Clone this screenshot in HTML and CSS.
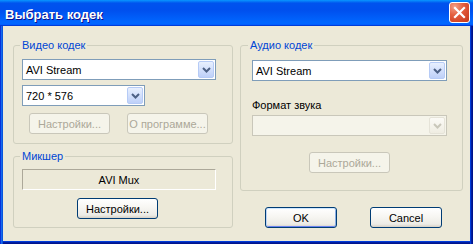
FILE: index.html
```html
<!DOCTYPE html>
<html lang="ru">
<head>
<meta charset="utf-8">
<title>Выбрать кодек</title>
<link rel="stylesheet" href="styles.css">
</head>
<body>
<div class="window">
  <div class="titlebar">
    <span class="title">Выбрать кодек</span>
    <span class="close"><svg width="19" height="19" viewBox="0 0 19 19"><path d="M5 5 L14 14 M14 5 L5 14" stroke="#fff" stroke-width="2.2" stroke-linecap="square"/></svg></span>
  </div>
  <div class="body">
    <div class="col col-left">
      <fieldset class="group group-video">
        <legend>Видео кодек</legend>
        <div class="combo combo-wide"><span class="val">AVI Stream</span><span class="drop"><svg width="9" height="6" viewBox="0 0 9 6"><path d="M1 1 L4.5 4.5 L8 1" fill="none" stroke="#4D6185" stroke-width="2"/></svg></span></div>
        <div class="combo combo-narrow"><span class="val">720 * 576</span><span class="drop"><svg width="9" height="6" viewBox="0 0 9 6"><path d="M1 1 L4.5 4.5 L8 1" fill="none" stroke="#4D6185" stroke-width="2"/></svg></span></div>
        <div class="btnrow">
          <button class="btn" disabled>Настройки...</button>
          <button class="btn" disabled>О программе...</button>
        </div>
      </fieldset>
      <fieldset class="group group-mixer">
        <legend>Микшер</legend>
        <div class="static">AVI Mux</div>
        <button class="btn btn-mixer">Настройки...</button>
      </fieldset>
    </div>
    <div class="col col-right">
      <fieldset class="group group-audio">
        <legend>Аудио кодек</legend>
        <div class="combo combo-audio"><span class="val">AVI Stream</span><span class="drop"><svg width="9" height="6" viewBox="0 0 9 6"><path d="M1 1 L4.5 4.5 L8 1" fill="none" stroke="#4D6185" stroke-width="2"/></svg></span></div>
        <div class="label">Формат звука</div>
        <div class="combo combo-audio combo-disabled"><span class="val"></span><span class="drop"><svg width="9" height="6" viewBox="0 0 9 6"><path d="M1 1 L4.5 4.5 L8 1" fill="none" stroke="#C9C7BA" stroke-width="2"/></svg></span></div>
        <button class="btn btn-audio" disabled>Настройки...</button>
      </fieldset>
      <div class="actions">
        <button class="btn btn-action btn-default">OK</button>
        <button class="btn btn-action">Cancel</button>
      </div>
    </div>
  </div>
</div>
</body>
</html>
```
FILE: styles.css
```css
* { box-sizing: border-box; }
body {
  margin: 0;
  font-family: "Liberation Sans", Arial, sans-serif;
  font-size: 11px;
  color: #000;
}
.window {
  width: 473px;
  height: 244px;
  display: flex;
  flex-direction: column;
  background: #ECE9D8;
}
.titlebar {
  height: 26px;
  flex: none;
  display: flex;
  justify-content: space-between;
  align-items: flex-start;
  padding: 0 3px 0 5px;
  background: linear-gradient(180deg, #0997FF 0%, #0053EE 12%, #0050EE 40%, #0066FF 85%, #0066FF 92%, #005BFF 95%, #003DD7 97%, #003DD7 100%);
}
.title {
  color: #fff;
  font-weight: bold;
  font-size: 13px;
  line-height: 13px;
  margin-top: 8px;
  text-shadow: 1px 1px #0F1089;
}
.close {
  width: 21px;
  height: 21px;
  margin-top: 2px;
  border: 1px solid #fff;
  border-radius: 3px;
  background: radial-gradient(circle at 25% 20%, #F4A088 0%, #E4603F 40%, #D5482A 70%, #C23A1C 100%);
  display: flex;
}
.body {
  flex: 1;
  display: flex;
  gap: 7px;
  padding: 13px 10px 0 13px;
  box-shadow: inset 1px 0 #0831D9, inset 2px 0 #166AEE, inset 3px 0 #0855DD,
              inset -1px 0 #00138C, inset -2px 0 #001EA0, inset -3px 0 #003BDA,
              inset 0 -1px #00138C, inset 0 -2px #001EA0, inset 0 -3px #003BDA;
}
.col { display: flex; flex-direction: column; }
.col-left { width: 220px; }
.col-right { width: 223px; }
.group {
  margin: 0;
  min-width: 0;
  border: 1px solid #D0D0BF;
  border-radius: 3px;
  display: flex;
  flex-direction: column;
  align-items: flex-start;
}
.group legend {
  color: #0046D5;
  line-height: 13px;
  height: 13px;
  padding: 0 2px;
}
.group-video { padding: 7px 0 9px 8px; }
.group-video legend { margin-left: -2px; }
.group-mixer { margin-top: 6px; padding: 6px 0 8px 8px; }
.group-mixer legend { margin-left: -2px; }
.group-audio { padding: 8px 0 17px 11px; }
.group-audio legend { margin-left: -4px; }

.combo {
  height: 21px;
  display: flex;
  align-items: center;
  border: 1px solid #7F9DB9;
  background: #fff;
}
.combo .val { flex: 1; padding-left: 3px; white-space: nowrap; }
.combo .drop {
  width: 16px;
  height: 17px;
  margin: 1px;
  border: 1px solid #B6CBF6;
  border-radius: 2px;
  background: linear-gradient(180deg, #E8F0FE 0%, #D3E0FC 50%, #BED0F8 100%);
  display: flex;
  align-items: center;
  justify-content: center;
}
.combo-wide { width: 194px; }
.combo-narrow { width: 123px; margin-top: 5px; }
.combo-audio { width: 195px; }
.combo-disabled { border-color: #C9C7BA; background: #F5F4EA; margin-top: 3px; }
.combo-disabled .drop { border-color: #E5E3D8; background: linear-gradient(180deg, #FBFAF6, #EFEDE2); }
.label { margin-top: 18px; line-height: 13px; height: 13px; }

.btnrow { display: flex; gap: 17px; margin-top: 7px; padding-left: 7px; }

.btn {
  height: 21px;
  width: 81px;
  padding: 0;
  font-family: inherit;
  font-size: 11px;
  color: #000;
  border: 1px solid #003C74;
  border-radius: 3px;
  background: linear-gradient(180deg, #FFFFFF 0%, #F7F6F2 45%, #ECEBE6 85%, #D6D0C5 100%);
}
.btn:disabled {
  border-color: #C9C7BA;
  background: #F5F4EA;
  color: #ACA899;
}
.static {
  width: 194px;
  height: 21px;
  border: 1px solid;
  border-color: #ACA899 #fff #fff #ACA899;
  display: flex;
  align-items: center;
  justify-content: center;
}
.btn-mixer { margin-top: 8px; margin-left: 55px; }
.btn-audio { margin-top: 16px; margin-left: 57px; }
.actions { display: flex; gap: 33px; margin-top: 16px; padding-left: 25px; }
.btn-action { width: 72px; }
.btn-default {
  box-shadow: inset 0 1px #CEE7FF, inset 1px 0 #BCD4F6, inset -1px 0 #89ADE4, inset 0 -1px #6982EE;
}
```
